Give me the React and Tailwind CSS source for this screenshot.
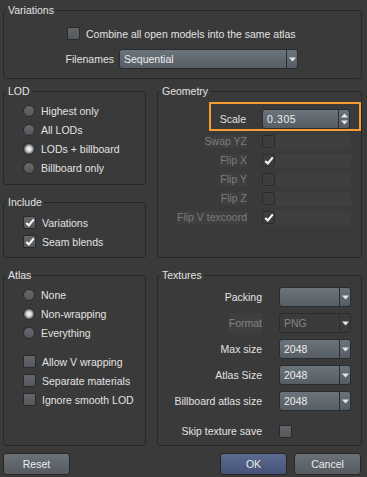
import React from "react";

const BG = "bg-[#3a3a3a]";

function Group({ title, className = "", children }) {
  return (
    <div className={`relative border border-[#272727] rounded-[3px] ${className}`}>
      <span className="absolute left-[2px] top-[-8px] px-[2px] bg-[#3a3a3a] leading-[14px] whitespace-nowrap">
        {title}
      </span>
      {children}
    </div>
  );
}

function Check({ checked = false, disabled = false }) {
  return (
    <span
      className={`w-[13px] h-[13px] rounded-[2px] border flex items-center justify-center shrink-0 ${
        disabled
          ? "border-[#2b2b2b] bg-[#3d3d3d]"
          : "border-[#2a2a2a] bg-[linear-gradient(#63676b,#54585c)]"
      }`}
    >
      {checked && (
        <svg width="10" height="9" viewBox="0 0 10 9">
          <path d="M1.2 5 L3.8 7.4 L8.8 1.4" stroke="#f4f4f4" strokeWidth="2.2" fill="none" />
        </svg>
      )}
    </span>
  );
}

function Radio({ checked = false }) {
  return (
    <span
      className={`w-[12px] h-[12px] rounded-full border border-[#2a2a2a] shrink-0 ${
        checked
          ? "bg-[radial-gradient(circle,#f6f6f6_0px,#d6d6d6_2.5px,#85898d_4px,#5a5e62_6px)]"
          : "bg-[linear-gradient(#676b6f,#54585c)]"
      }`}
    />
  );
}

function Arrow() {
  return (
    <svg width="7" height="5" viewBox="0 0 7 5">
      <path d="M0 0.5 H7 L3.5 4.5 Z" fill="#e6e6e6" />
    </svg>
  );
}

function Combo({ value = "", className = "", disabled = false }) {
  return (
    <div
      className={`h-[20px] flex rounded-[3px] border ${
        disabled
          ? "border-[#2c2c2c] bg-[#3b3b3b] text-[#858585]"
          : "border-[#2a2d30] bg-[linear-gradient(#6c747b,#565d64)] text-[#eeeeee]"
      } ${className}`}
    >
      <div className="flex-1 flex items-center pl-[4px] leading-none whitespace-nowrap">{value}</div>
      <div className="w-[11px] border-l border-[#2a2d30] flex items-center justify-center">
        <Arrow />
      </div>
    </div>
  );
}

function Spin({ value, className = "" }) {
  return (
    <div
      className={`h-[20px] flex rounded-[3px] border border-[#2a2d30] bg-[linear-gradient(#6c747b,#565d64)] text-[#eeeeee] ${className}`}
    >
      <div className="flex-1 flex items-center pl-[4px] leading-none tracking-[0.6px]">{value}</div>
      <div className="w-[11px] border-l border-[#2a2d30] flex flex-col items-center justify-center gap-[2px]">
        <svg width="7" height="5" viewBox="0 0 7 5">
          <path d="M0 4.5 H7 L3.5 0.5 Z" fill="#e6e6e6" />
        </svg>
        <svg width="7" height="5" viewBox="0 0 7 5">
          <path d="M0 0.5 H7 L3.5 4.5 Z" fill="#e6e6e6" />
        </svg>
      </div>
    </div>
  );
}

function RadioRow({ label, checked }) {
  return (
    <div className="flex items-center h-[19px] gap-[6px]">
      <Radio checked={checked} />
      <span className="whitespace-nowrap">{label}</span>
    </div>
  );
}

function CheckRow({ label, checked }) {
  return (
    <div className="flex items-center h-[19px] gap-[6px]">
      <Check checked={checked} />
      <span className="whitespace-nowrap">{label}</span>
    </div>
  );
}

function GeoRow({ label, checked }) {
  return (
    <div className="flex items-center h-[19px]">
      <div className="w-[89px] flex justify-end">
        <span className="bg-[#3f3f3f] text-[#7b7b7b] leading-[13px] h-[13px] whitespace-nowrap">{label}</span>
      </div>
      <div className="ml-[15px] w-[89px] h-[14px] bg-[#3f3f3f] flex items-center">
        <Check checked={checked} disabled />
      </div>
    </div>
  );
}

function TexRow({ label, value, disabled }) {
  return (
    <div className="flex items-center h-[20px]">
      <div className="w-[104px] flex justify-end">
        {disabled ? (
          <span className="bg-[#3f3f3f] text-[#858585] h-[20px] flex items-center whitespace-nowrap">{label}</span>
        ) : (
          <span className="whitespace-nowrap">{label}</span>
        )}
      </div>
      <Combo value={value} disabled={disabled} className="ml-[17px] w-[72px]" />
    </div>
  );
}

function Button({ children, primary, className = "" }) {
  return (
    <div
      className={`h-[22px] w-[67px] rounded-[3px] border border-[#262626] flex items-center justify-center text-[#ececec] ${
        primary
          ? "bg-[linear-gradient(#5b6a8f,#465378)]"
          : "bg-[linear-gradient(#6a7177,#555b61)]"
      } ${className}`}
    >
      {children}
    </div>
  );
}

export default function App() {
  return (
    <div
      className={`w-[367px] h-[477px] ${BG} pl-[3px] text-[10.5px] leading-[14px] text-[#e2e2e2] font-['Liberation_Sans',Arial,sans-serif] overflow-hidden`}
    >
      <Group title="Variations" className="mt-[10px] w-[359px] h-[69px] pt-[16px]">
        <div className="flex items-center h-[13px] pl-[63px] gap-[6px]">
          <Check />
          <span className="whitespace-nowrap">Combine all open models into the same atlas</span>
        </div>
        <div className="flex items-center mt-[9px] h-[20px]">
          <span className="w-[110px] text-right">Filenames</span>
          <Combo value="Sequential" className="ml-[5px] w-[179px]" />
        </div>
      </Group>

      <div className="mt-[12px] flex gap-[11px] w-[359px]">
        <div className="w-[143px] flex flex-col">
          <Group title="LOD" className="h-[94px] pt-[9px] pl-[19px]">
            <RadioRow label="Highest only" />
            <RadioRow label="All LODs" />
            <RadioRow label="LODs + billboard" checked />
            <RadioRow label="Billboard only" />
          </Group>
          <Group title="Include" className="mt-[17px] h-[56px] pt-[10px] pl-[19px]">
            <CheckRow label="Variations" checked />
            <CheckRow label="Seam blends" checked />
          </Group>
        </div>
        <Group title="Geometry" className="w-[205px] pt-[17px]">
          <div className="flex items-center h-[20px]">
            <div className="w-[88px] flex justify-end">
              <span>Scale</span>
            </div>
            <Spin value="0.305" className="ml-[16px] w-[88px]" />
          </div>
          <div className="mt-[3px] flex flex-col">
            <GeoRow label="Swap YZ" />
            <GeoRow label="Flip X" checked />
            <GeoRow label="Flip Y" />
            <GeoRow label="Flip Z" />
            <GeoRow label="Flip V texcoord" checked />
          </div>
          <div className="absolute left-[51px] top-[10px] w-[152px] h-[29px] border-2 border-[#f59d32] pointer-events-none" />
        </Group>
      </div>

      <div className="mt-[17px] flex gap-[11px] w-[359px] h-[171px]">
        <Group title="Atlas" className="w-[143px] pt-[9px] pl-[19px]">
          <RadioRow label="None" />
          <RadioRow label="Non-wrapping" checked />
          <RadioRow label="Everything" />
          <div className="mt-[10px]">
            <CheckRow label="Allow V wrapping" />
            <CheckRow label="Separate materials" />
            <CheckRow label="Ignore smooth LOD" />
          </div>
        </Group>
        <Group title="Textures" className="w-[205px] pt-[11px] flex flex-col gap-[6px]">
          <TexRow label="Packing" value="" />
          <TexRow label="Format" value="PNG" disabled />
          <TexRow label="Max size" value="2048" />
          <TexRow label="Atlas Size" value="2048" />
          <TexRow label="Billboard atlas size" value="2048" />
          <div className="flex items-center h-[20px] mt-[4px]">
            <div className="w-[104px] flex justify-end">
              <span className="whitespace-nowrap">Skip texture save</span>
            </div>
            <span className="ml-[17px]">
              <Check />
            </span>
          </div>
        </Group>
      </div>

      <div className="mt-[7px] flex w-[359px] pr-[1px]">
        <Button>Reset</Button>
        <Button primary className="ml-auto">OK</Button>
        <Button className="ml-[7px]">Cancel</Button>
      </div>
    </div>
  );
}
